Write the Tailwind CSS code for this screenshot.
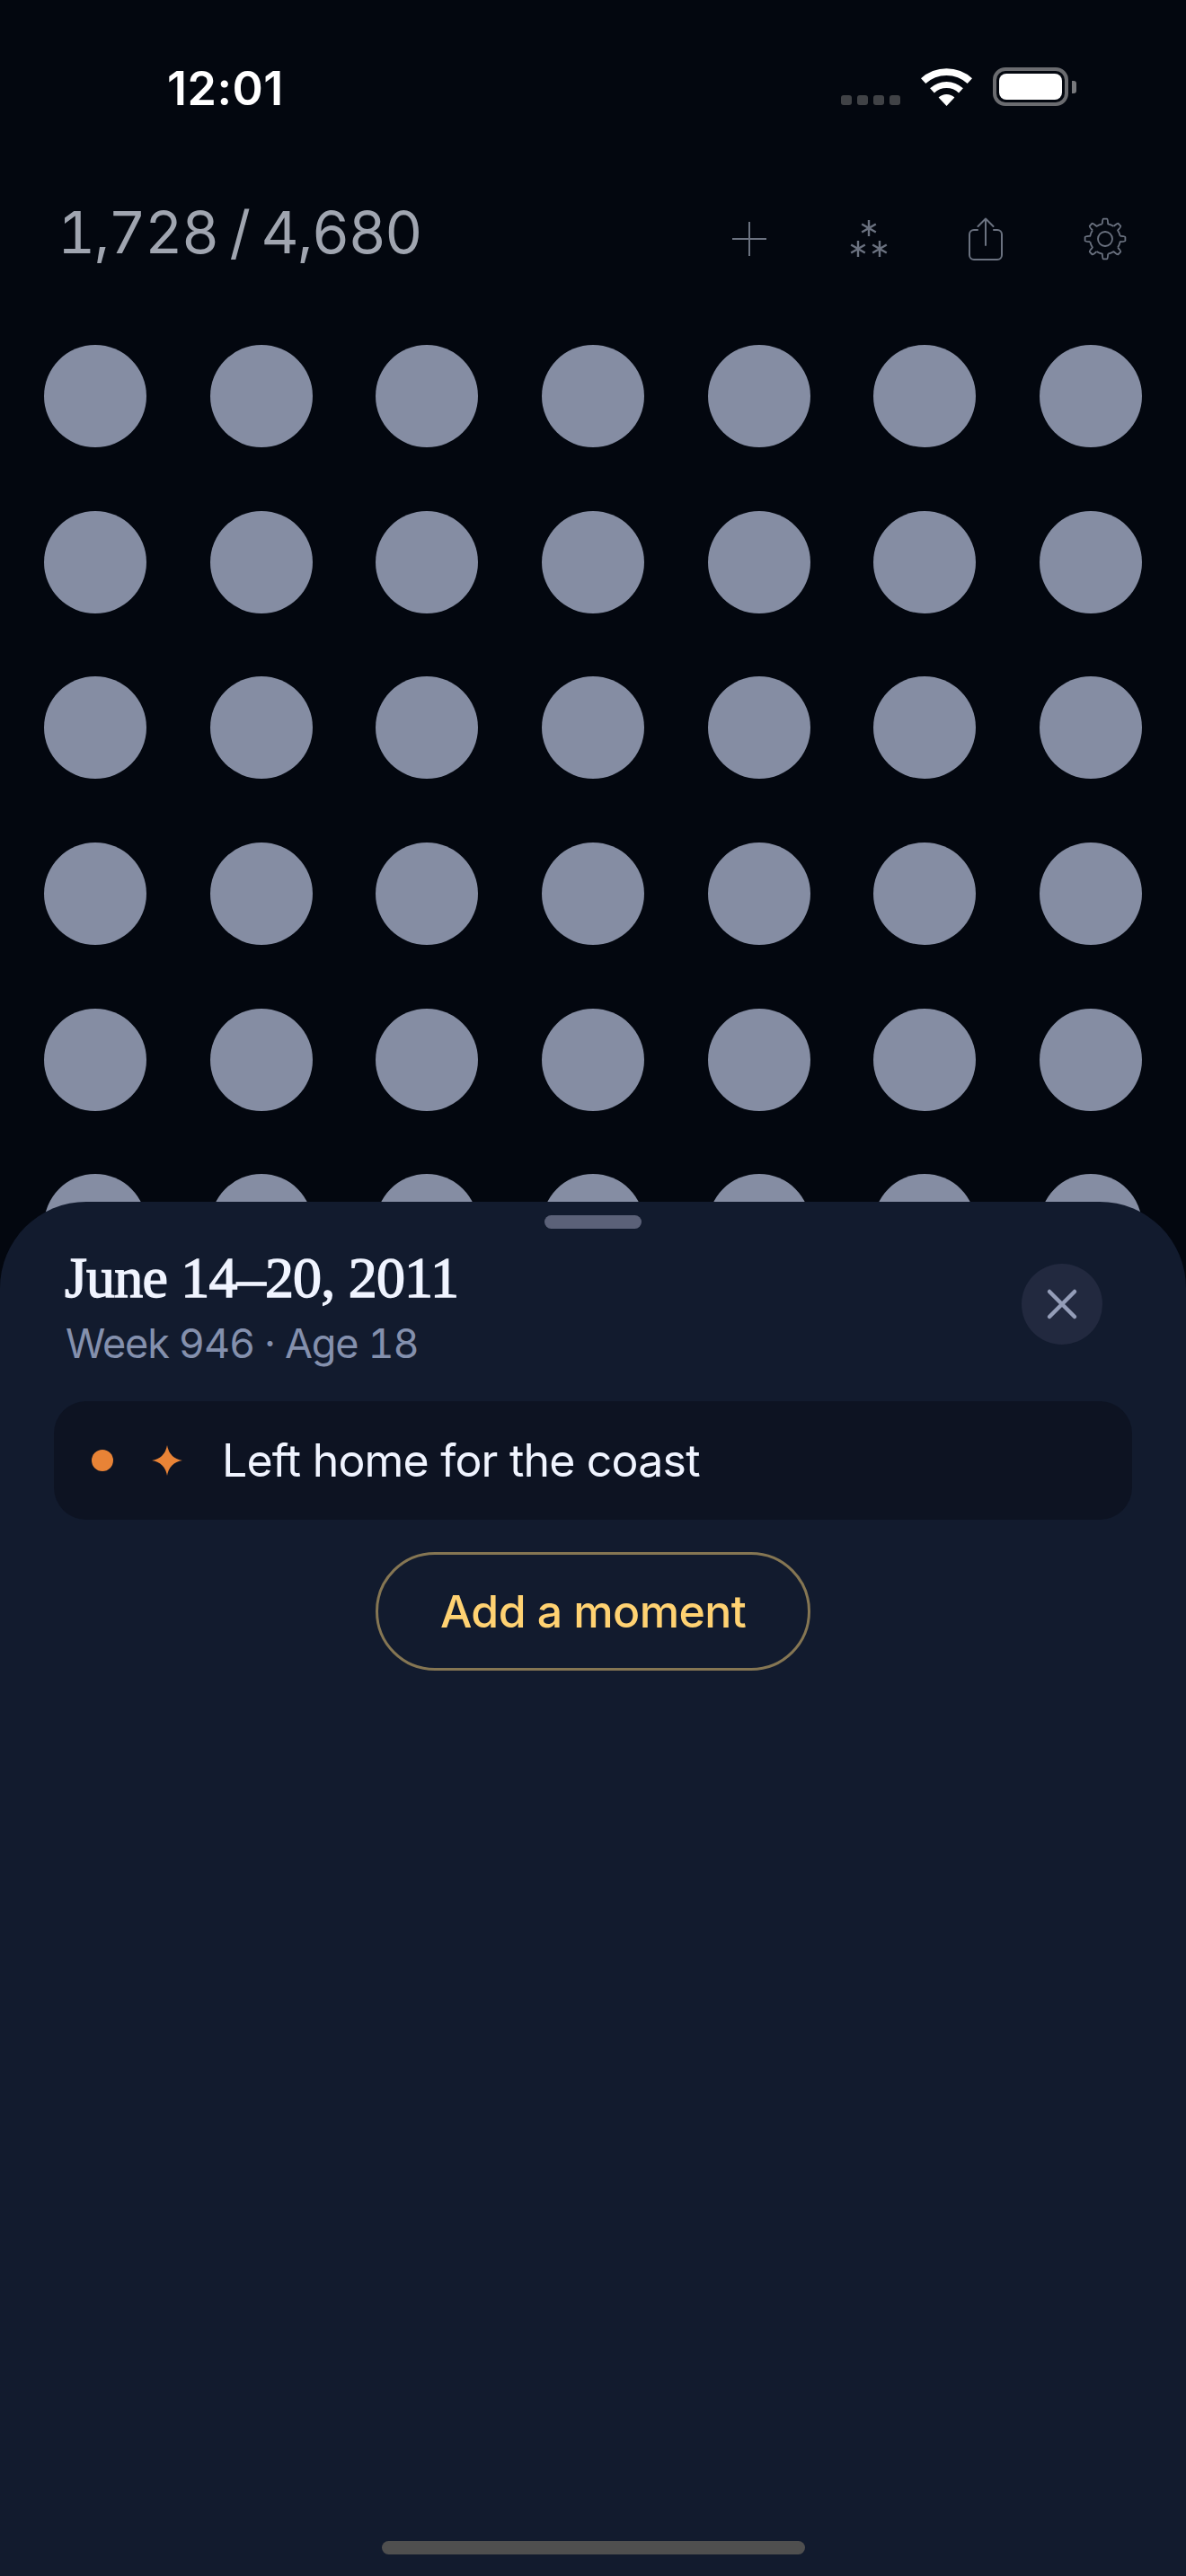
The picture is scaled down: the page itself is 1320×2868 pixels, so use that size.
<!DOCTYPE html>
<html lang="en">
<head>
  <meta charset="UTF-8" />
  <title>Weeks</title>
  <script src="https://cdn.jsdelivr.net/npm/@tailwindcss/browser@4"></script>
</head>
<body class="bg-[#03070f]">
  <div class="relative w-[1320px] h-[2868px] overflow-hidden bg-[#03070f] font-[Inter,sans-serif]">

    <!-- status bar -->
    <div class="flex items-end h-[118px] pl-[186px] pr-[122px]">
      <span class="text-[52px] leading-[51px] font-semibold text-white tracking-[0.5px] mb-[-6px]">12:01</span>
      <div class="ml-auto flex items-end">
        <div class="flex gap-[6px] mb-[1px]">
          <span class="w-[12px] h-[11px] rounded-[3px] bg-[#404246]"></span>
          <span class="w-[12px] h-[11px] rounded-[3px] bg-[#404246]"></span>
          <span class="w-[12px] h-[11px] rounded-[3px] bg-[#404246]"></span>
          <span class="w-[12px] h-[11px] rounded-[3px] bg-[#404246]"></span>
        </div>
        <svg class="ml-[23px]" width="57" height="42" viewBox="0 0 57 42" fill="#fff">
          <path d="M0 11.3A42 42 0 0 1 57 11.3L51.7 17.1A34 34 0 0 0 5.3 17.1Z" />
          <path d="M10.1 22.3A27 27 0 0 1 46.9 22.3L42.1 27.4A20 20 0 0 0 14.9 27.4Z" />
          <path d="M19.6 32.5A13 13 0 0 1 37.4 32.5L28.5 42Z" />
        </svg>
        <div class="ml-[23px] flex items-center">
          <div class="w-[84px] h-[43px] rounded-[14px] border-[4px] border-[#6b6c70] p-[3px]">
            <div class="w-full h-full rounded-[8px] bg-white"></div>
          </div>
          <div class="ml-[4px] w-[5px] h-[14px] rounded-r-[3px] bg-[#77787c]"></div>
        </div>
      </div>
    </div>

    <!-- counter and toolbar -->
    <div class="flex items-center h-[90px] mt-[103px] pl-[64px]">
      <span class="text-[65px] leading-[90px] text-[#a0a5b0] tabular-nums [word-spacing:-3px] tracking-[-1.5px] mt-[-14px]">1,728 / 4,680</span>
      <div class="ml-auto flex items-center text-[#6b7280]">
        <svg class="mr-[91px]" width="40" height="40" viewBox="0 0 40 40" fill="none" stroke="currentColor" stroke-width="2">
          <path d="M20 1V39M1 20H39" />
        </svg>
        <svg class="mr-[89px]" width="44" height="44" viewBox="0 0 44 44" fill="none" stroke="currentColor" stroke-width="2.4">
          <path d="M22 1V19M14.2 5.5L29.8 14.5M14.2 14.5L29.8 5.5" />
          <path d="M10 24V42M2.2 28.5L17.8 37.5M2.2 37.5L17.8 28.5" />
          <path d="M34 24V42M26.2 28.5L41.8 37.5M26.2 37.5L41.8 28.5" />
        </svg>
        <svg class="mr-[90px]" width="38" height="48" viewBox="0 0 38 48" fill="none" stroke="currentColor" stroke-width="2" stroke-linecap="round" stroke-linejoin="round">
          <path d="M10 14H6A5 5 0 0 0 1 19V42A5 5 0 0 0 6 47H32A5 5 0 0 0 37 42V19A5 5 0 0 0 32 14H28" />
          <path d="M19 31V2M10.5 10L19 1.5L27.5 10" />
        </svg>
        <svg class="mr-[66px]" width="48" height="48" viewBox="0 0 48 48" fill="none" stroke="currentColor" stroke-width="1.8" stroke-linejoin="round">
          <circle cx="24" cy="24" r="8" />
          <path d="M20.8 7.3C21 5 21 1.6 22 1.6H26C27 1.6 27 5 27.2 7.3A17 17 0 0 1 33.5 9.9" />
          <path transform="rotate(45 24 24)" d="M20.8 7.3C21 5 21 1.6 22 1.6H26C27 1.6 27 5 27.2 7.3A17 17 0 0 1 33.5 9.9" />
          <path transform="rotate(90 24 24)" d="M20.8 7.3C21 5 21 1.6 22 1.6H26C27 1.6 27 5 27.2 7.3A17 17 0 0 1 33.5 9.9" />
          <path transform="rotate(135 24 24)" d="M20.8 7.3C21 5 21 1.6 22 1.6H26C27 1.6 27 5 27.2 7.3A17 17 0 0 1 33.5 9.9" />
          <path transform="rotate(180 24 24)" d="M20.8 7.3C21 5 21 1.6 22 1.6H26C27 1.6 27 5 27.2 7.3A17 17 0 0 1 33.5 9.9" />
          <path transform="rotate(225 24 24)" d="M20.8 7.3C21 5 21 1.6 22 1.6H26C27 1.6 27 5 27.2 7.3A17 17 0 0 1 33.5 9.9" />
          <path transform="rotate(270 24 24)" d="M20.8 7.3C21 5 21 1.6 22 1.6H26C27 1.6 27 5 27.2 7.3A17 17 0 0 1 33.5 9.9" />
          <path transform="rotate(315 24 24)" d="M20.8 7.3C21 5 21 1.6 22 1.6H26C27 1.6 27 5 27.2 7.3A17 17 0 0 1 33.5 9.9" />
        </svg>
      </div>
    </div>

    <!-- week dots -->
    <div class="grid grid-cols-[repeat(7,114px)] justify-between gap-y-[70.67px] mx-[49px] mt-[73px]">
      <div class="h-[114px] rounded-full bg-[#858da3]"></div><div class="h-[114px] rounded-full bg-[#858da3]"></div><div class="h-[114px] rounded-full bg-[#858da3]"></div><div class="h-[114px] rounded-full bg-[#858da3]"></div><div class="h-[114px] rounded-full bg-[#858da3]"></div><div class="h-[114px] rounded-full bg-[#858da3]"></div><div class="h-[114px] rounded-full bg-[#858da3]"></div>
      <div class="h-[114px] rounded-full bg-[#858da3]"></div><div class="h-[114px] rounded-full bg-[#858da3]"></div><div class="h-[114px] rounded-full bg-[#858da3]"></div><div class="h-[114px] rounded-full bg-[#858da3]"></div><div class="h-[114px] rounded-full bg-[#858da3]"></div><div class="h-[114px] rounded-full bg-[#858da3]"></div><div class="h-[114px] rounded-full bg-[#858da3]"></div>
      <div class="h-[114px] rounded-full bg-[#858da3]"></div><div class="h-[114px] rounded-full bg-[#858da3]"></div><div class="h-[114px] rounded-full bg-[#858da3]"></div><div class="h-[114px] rounded-full bg-[#858da3]"></div><div class="h-[114px] rounded-full bg-[#858da3]"></div><div class="h-[114px] rounded-full bg-[#858da3]"></div><div class="h-[114px] rounded-full bg-[#858da3]"></div>
      <div class="h-[114px] rounded-full bg-[#858da3]"></div><div class="h-[114px] rounded-full bg-[#858da3]"></div><div class="h-[114px] rounded-full bg-[#858da3]"></div><div class="h-[114px] rounded-full bg-[#858da3]"></div><div class="h-[114px] rounded-full bg-[#858da3]"></div><div class="h-[114px] rounded-full bg-[#858da3]"></div><div class="h-[114px] rounded-full bg-[#858da3]"></div>
      <div class="h-[114px] rounded-full bg-[#858da3]"></div><div class="h-[114px] rounded-full bg-[#858da3]"></div><div class="h-[114px] rounded-full bg-[#858da3]"></div><div class="h-[114px] rounded-full bg-[#858da3]"></div><div class="h-[114px] rounded-full bg-[#858da3]"></div><div class="h-[114px] rounded-full bg-[#858da3]"></div><div class="h-[114px] rounded-full bg-[#858da3]"></div>
      <div class="h-[114px] rounded-full bg-[#858da3]"></div><div class="h-[114px] rounded-full bg-[#858da3]"></div><div class="h-[114px] rounded-full bg-[#858da3]"></div><div class="h-[114px] rounded-full bg-[#858da3]"></div><div class="h-[114px] rounded-full bg-[#858da3]"></div><div class="h-[114px] rounded-full bg-[#858da3]"></div><div class="h-[114px] rounded-full bg-[#858da3]"></div>
    </div>

    <!-- week sheet -->
    <div class="absolute left-0 right-0 bottom-0 h-[1530px] flex flex-col rounded-t-[96px] bg-[#121b2e]">
      <div class="mx-auto mt-[15px] w-[108px] h-[15px] rounded-full bg-[#5b6178]"></div>

      <div class="flex items-start justify-between mt-[19px] pl-[72px] pr-[93px]">
        <div>
          <h1 class="font-['Liberation_Serif',serif] font-normal [-webkit-text-stroke:1.4px_#f0f4ff] text-[64px] leading-[72px] tracking-[-0.8px] text-[#f0f4ff]">June 14–20, 2011</h1>
          <p class="text-[45px] leading-[54px] mt-[10px] ml-[1px] tabular-nums tracking-[-1.1px] text-[#8490ad]">Week 946 · Age 18</p>
        </div>
        <button class="flex items-center justify-center w-[90px] h-[90px] mt-[20px] rounded-full bg-[#22293f]">
          <svg width="36" height="36" viewBox="0 0 36 36" fill="none" stroke="#949db8" stroke-width="4.5" stroke-linecap="round">
            <path d="M4 4L32 32M32 4L4 32" />
          </svg>
        </button>
      </div>

      <div class="flex items-center h-[132px] mx-[60px] mt-[37px] pl-[42px] rounded-[36px] bg-[#0d1322]">
        <span class="w-[24px] h-[24px] rounded-full bg-[#e88336]"></span>
        <svg class="ml-[43px]" width="34" height="34" viewBox="0 0 34 34" fill="#e88336">
          <path d="M17 0Q19.5 14.5 34 17Q19.5 19.5 17 34Q14.5 19.5 0 17Q14.5 14.5 17 0Z" />
        </svg>
        <span class="ml-[44px] text-[50px] leading-[60px] tracking-[-0.8px] text-[#f0f4ff]">Left home for the coast</span>
      </div>

      <button class="flex items-center justify-center self-center w-[484px] h-[132px] mt-[36px] rounded-full border-[3px] border-[#857653] text-[50px] tracking-[-0.6px] font-medium text-[#ffd272]">Add a moment</button>

      <div class="mx-auto mt-auto mb-[24px] w-[471px] h-[15px] rounded-full bg-[#4f4f4f]"></div>
    </div>
  </div>
</body>
</html>
